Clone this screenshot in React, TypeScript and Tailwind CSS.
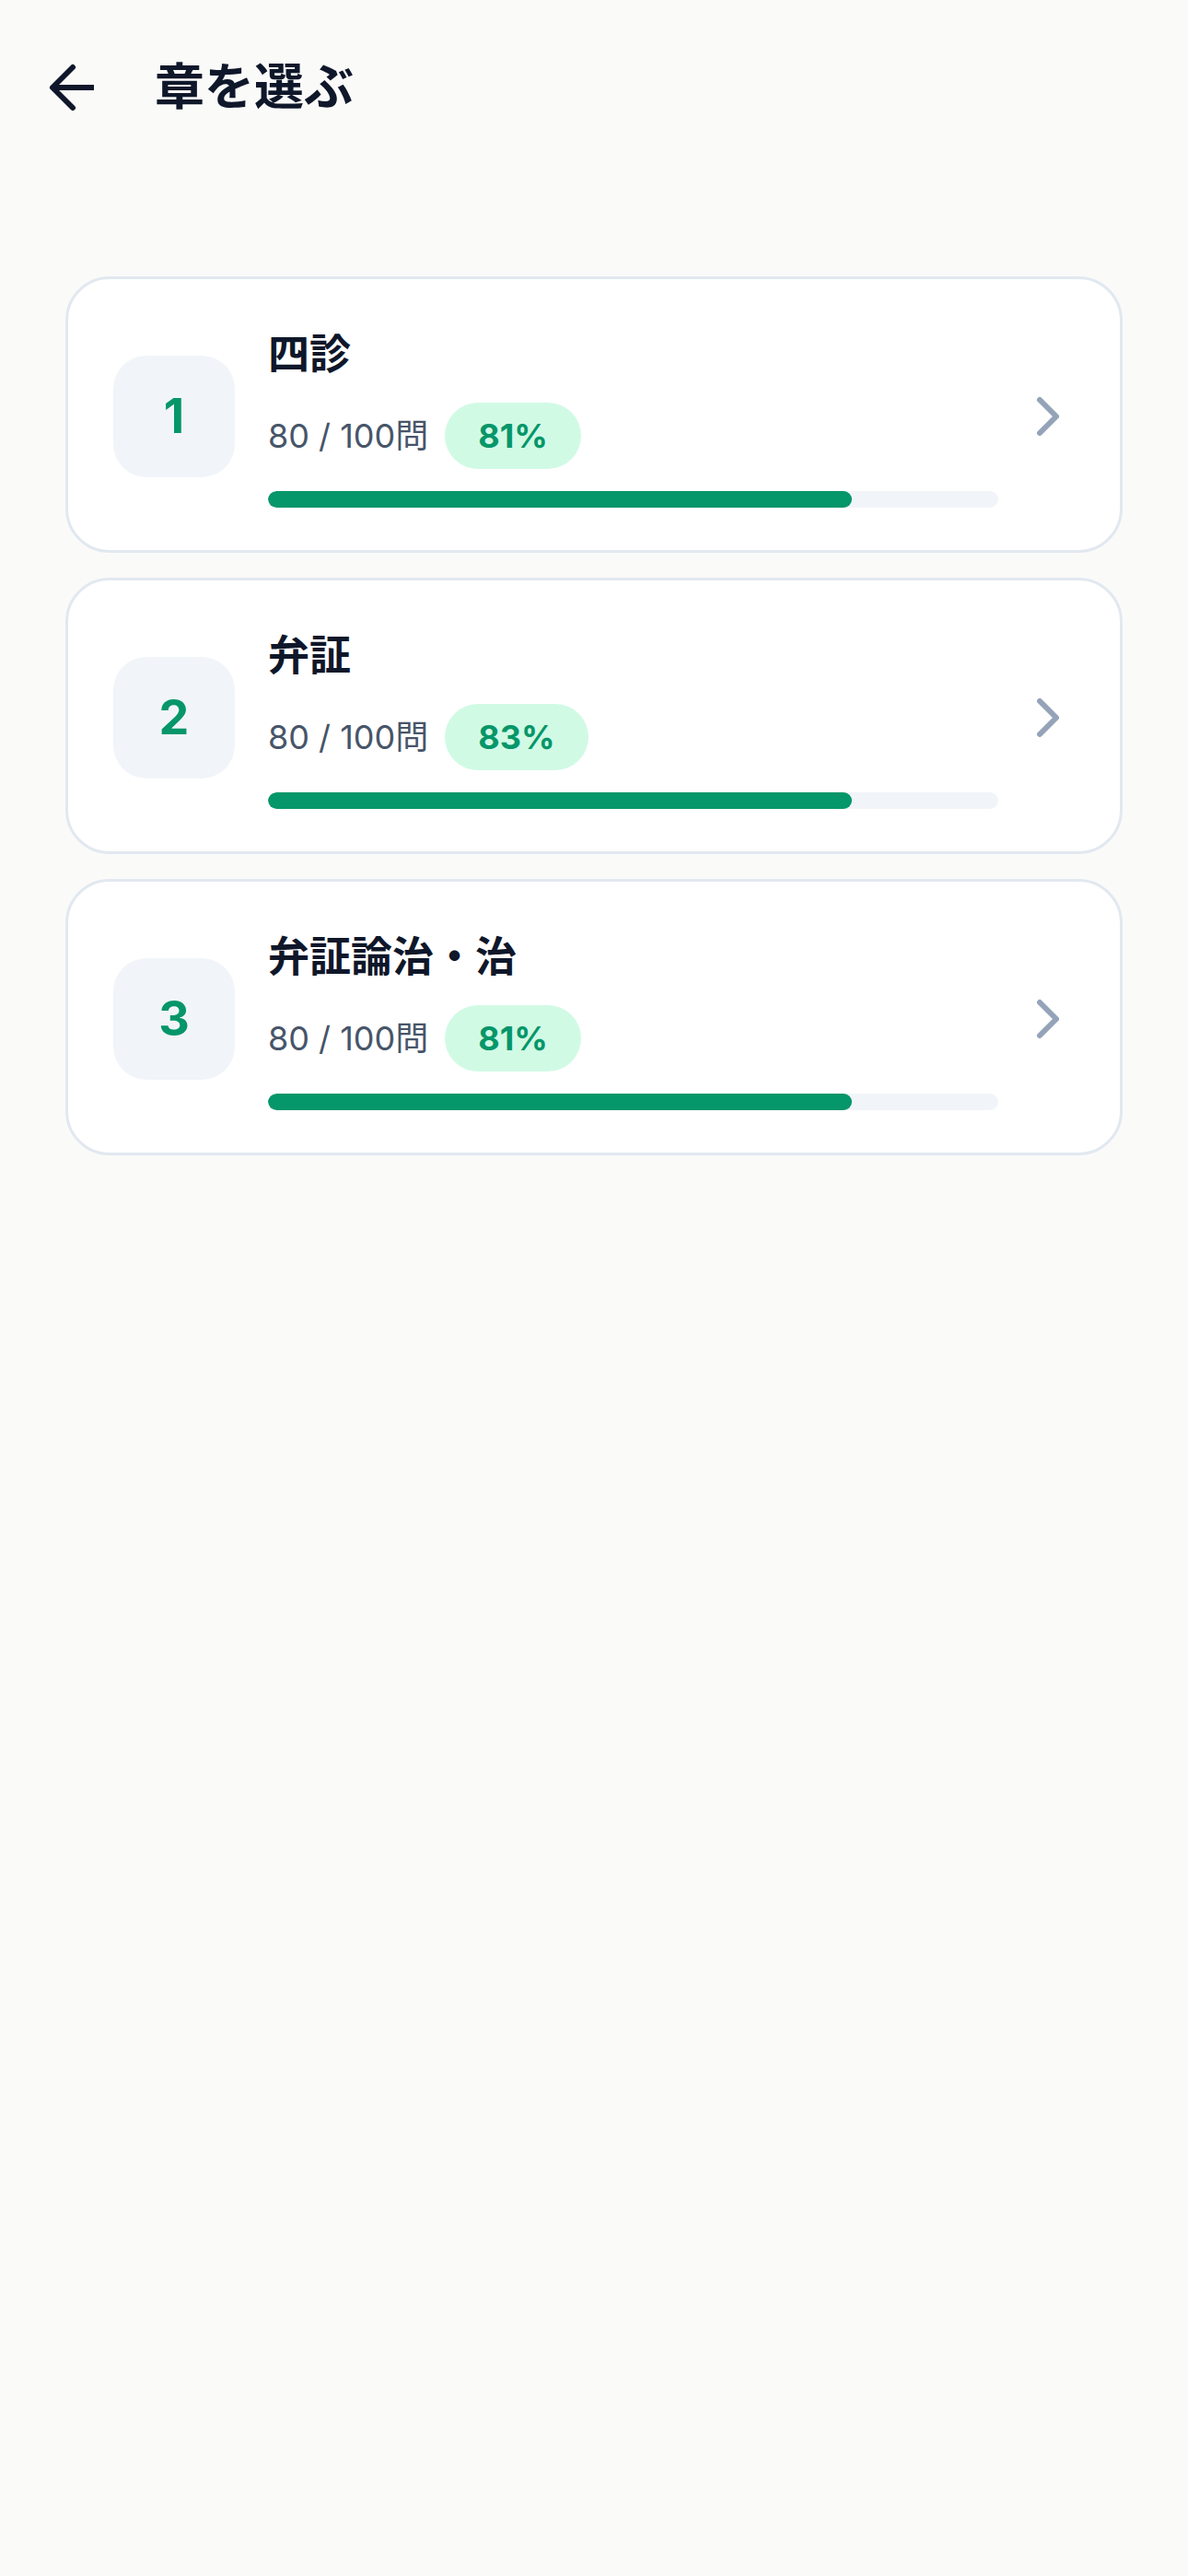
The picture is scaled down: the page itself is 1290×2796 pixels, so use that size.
import React from "react";

type Chapter = { no: number; title: string; done: number; total: number; rate: number };

const chapters: Chapter[] = [
  { no: 1, title: "四診", done: 80, total: 100, rate: 81 },
  { no: 2, title: "弁証", done: 80, total: 100, rate: 83 },
  { no: 3, title: "弁証論治・治", done: 80, total: 100, rate: 81 },
];

function BackArrow() {
  return (
    <svg width="72" height="72" viewBox="0 0 72 72" fill="none" className="shrink-0">
      <path d="M60 36H18" stroke="#0f172a" strokeWidth="6" strokeLinecap="butt" />
      <path d="M37 14L15 36L37 58" stroke="#0f172a" strokeWidth="6" strokeLinecap="round" strokeLinejoin="round" />
    </svg>
  );
}

function Chevron() {
  return (
    <svg width="72" height="72" viewBox="0 0 24 24" fill="none" className="shrink-0">
      <path d="m9 18 6-6-6-6" stroke="#94a3b8" strokeWidth="2" strokeLinecap="round" strokeLinejoin="round" />
    </svg>
  );
}

function ChapterCard({ c }: { c: Chapter }) {
  const pct = (c.done / c.total) * 100;
  return (
    <div className="flex items-center h-[300px] rounded-[48px] border-[3px] border-[#e2e8f0] bg-white pl-[49px] pr-[42px] pt-[4px]">
      <div className="w-[132px] h-[132px] shrink-0 rounded-[36px] bg-[#f1f5f9] flex items-center justify-center">
        <span className="text-[52px] font-bold text-[#059669] leading-none">{c.no}</span>
      </div>
      <div className="flex-1 ml-[36px] flex flex-col pt-[2px]">
        <div className="text-[45px] leading-[60px] font-bold text-[#0f172a]">{c.title}</div>
        <div className="mt-[22px] h-[72px] flex items-center gap-[18px]">
          <span className="text-[36px] text-[#475569] leading-none">
            {c.done} / {c.total}問
          </span>
          <span className="h-[72px] px-[36px] rounded-full bg-[#d1fae5] flex items-center text-[36px] font-bold text-[#059669] leading-none">
            {c.rate}%
          </span>
        </div>
        <div className="mt-[24px] h-[18px] rounded-full bg-[#f1f5f9] overflow-hidden">
          <div className="h-full rounded-full bg-[#059669]" style={{ width: `${pct}%` }} />
        </div>
      </div>
      <div className="ml-[18px]">
        <Chevron />
      </div>
    </div>
  );
}

export default function App() {
  return (
    <div
      className="min-h-[2796px] w-full bg-[#fafaf9]"
      style={{ fontFamily: 'Inter, "Noto Sans CJK JP", sans-serif' }}
    >
      <div className="pt-[59px] pl-[42px] flex items-center h-[131px] gap-[54px]">
        <BackArrow />
        <h1 className="text-[54px] leading-[72px] font-bold text-[#0f172a]">章を選ぶ</h1>
      </div>
      <div className="mt-[169px] px-[71px] flex flex-col gap-[27px]">
        {chapters.map((c) => (
          <ChapterCard key={c.no} c={c} />
        ))}
      </div>
    </div>
  );
}
